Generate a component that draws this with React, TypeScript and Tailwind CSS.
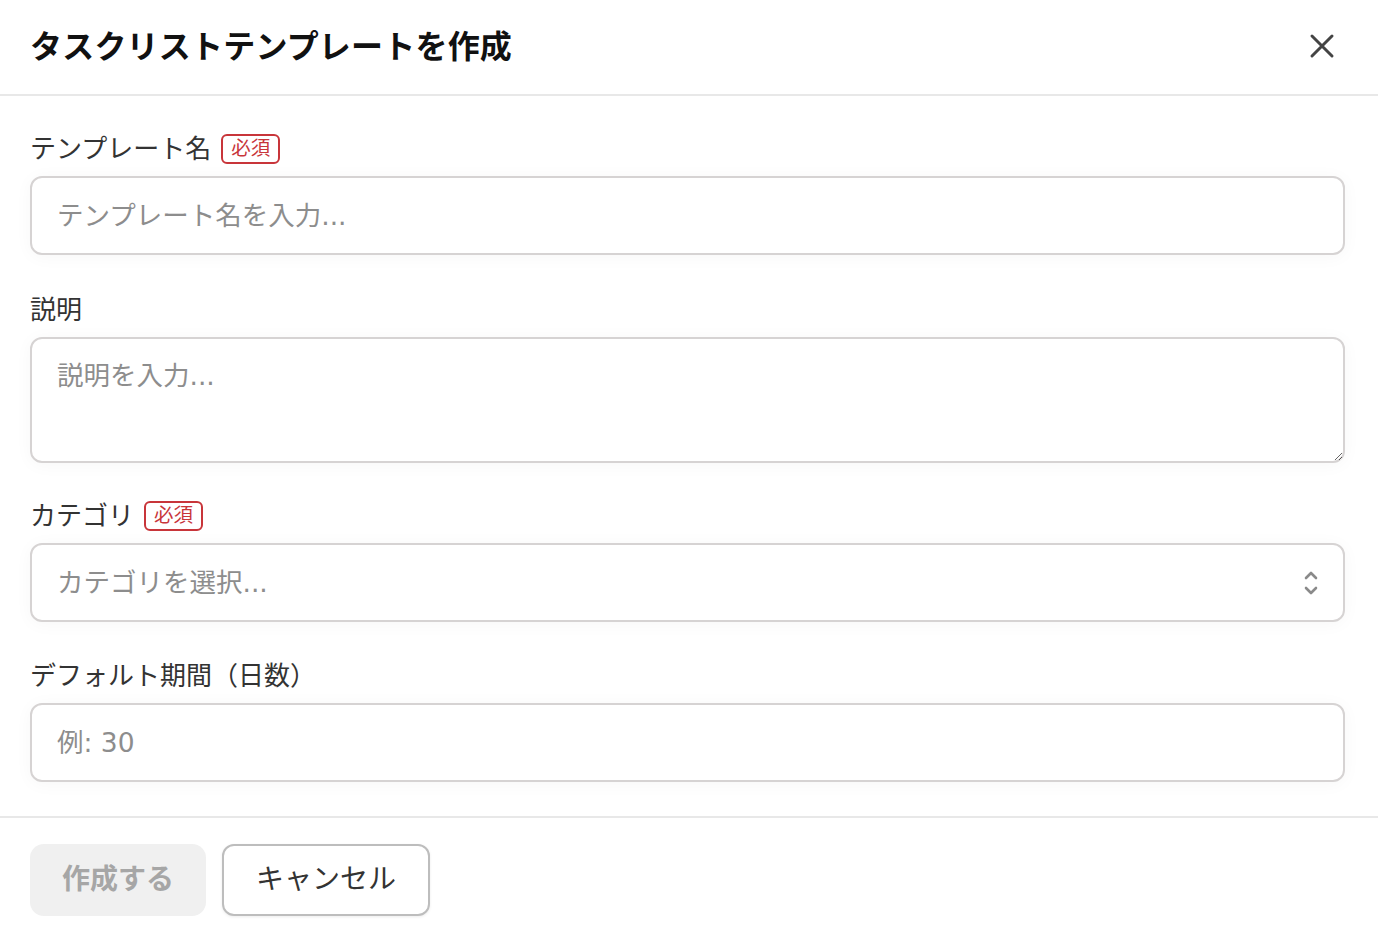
import React from "react";

const font = { fontFamily: '"Liberation Sans", "Noto Sans CJK JP", sans-serif' };
const inputFont = { fontFamily: '"DejaVu Sans", "Noto Sans CJK JP", sans-serif' };

function Badge() {
  return (
    <span className="ml-[10px] inline-flex h-[30px] items-center rounded-[6px] border-2 border-[#c8353a] px-[8px] text-[19.5px] leading-none text-[#c8353a]">
      必須
    </span>
  );
}

function Label({ text, required }: { text: string; required?: boolean }) {
  return (
    <div className="flex h-[36px] items-center text-[26px] text-[#333333]">
      <span>{text}</span>
      {required && <Badge />}
    </div>
  );
}

const boxCls =
  "w-full rounded-[12px] border-2 border-[#d6d3d3] bg-white px-[25px] text-[26.5px] text-[#333] placeholder:text-[#8d8d8d] shadow-[0_2px_18px_rgba(0,0,0,0.035)] outline-none";

export default function App() {
  return (
    <div style={font} className="flex h-[946px] w-[1378px] flex-col bg-white">
      <header className="flex h-[96px] shrink-0 items-center justify-between border-b-2 border-[#e8e8e8] pl-[30px] pr-[43px]">
        <h1 className="text-[32px] font-bold tracking-[0.2px] text-[#111]">タスクリストテンプレートを作成</h1>
        <svg width="26" height="26" viewBox="0 0 26 26" fill="none" stroke="#444" strokeWidth="3" strokeLinecap="round" className="-mt-[2px]">
          <path d="M3 3L23 23M23 3L3 23" />
        </svg>
      </header>

      <main className="flex flex-col pl-[30px] pr-[33px] pt-[35px]">
        <Label text="テンプレート名" required />
        <input style={inputFont} className={`${boxCls} mt-[9px] h-[79px]`} placeholder="テンプレート名を入力..." />

        <div className="mt-[37px]">
          <Label text="説明" />
        </div>
        <textarea
          style={inputFont}
          className={`${boxCls} mt-[9px] block h-[126px] resize-y pt-[17px]`}
          placeholder="説明を入力..."
        />

        <div className="mt-[35px]">
          <Label text="カテゴリ" required />
        </div>
        <div style={inputFont} className={`${boxCls} mt-[9px] flex h-[79px] items-center justify-between pr-[24px]`}>
          <span className="text-[#8d8d8d]">カテゴリを選択...</span>
          <svg width="16" height="28" viewBox="0 0 16 28" fill="none" stroke="#8a8a8a" strokeWidth="2.6" strokeLinecap="round" strokeLinejoin="round">
            <path d="M3 9L8 4L13 9" />
            <path d="M3 19L8 24L13 19" />
          </svg>
        </div>

        <div className="mt-[36px]">
          <Label text="デフォルト期間（日数）" />
        </div>
        <input style={inputFont} className={`${boxCls} mt-[9px] h-[79px]`} placeholder="例: 30" />
      </main>

      <footer className="mt-[34px] flex gap-[16px] border-t-2 border-[#e8e8e8] px-[30px] pt-[26px]">
        <button className="flex h-[72px] w-[176px] items-center justify-center rounded-[14px] bg-[#f0f0f0] text-[28px] font-bold text-[#a6a6a6]">
          作成する
        </button>
        <button className="flex h-[72px] w-[208px] items-center justify-center rounded-[12px] border-2 border-[#bdbdbd] bg-white text-[28px] text-[#333] shadow-[0_1px_3px_rgba(0,0,0,0.08)]">
          キャンセル
        </button>
      </footer>
    </div>
  );
}
